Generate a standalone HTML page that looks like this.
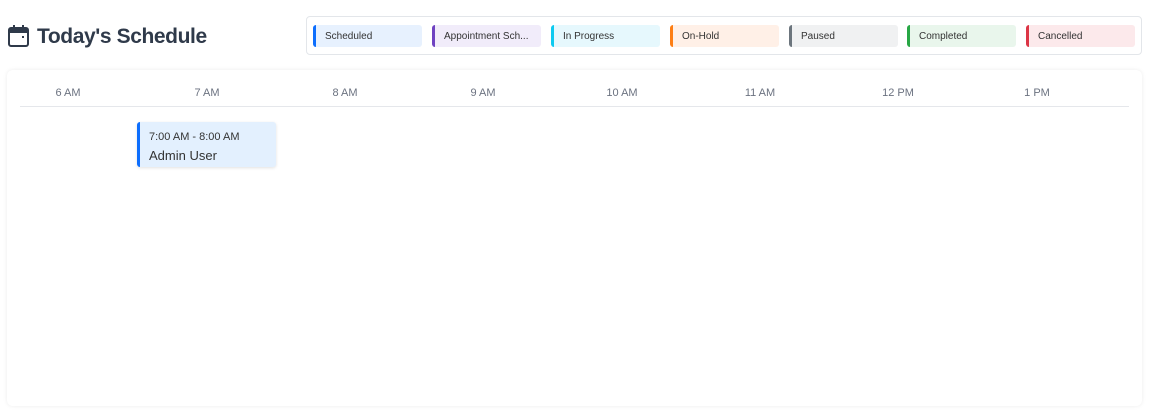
<!DOCTYPE html>
<html><head><style>
*{box-sizing:border-box;margin:0;padding:0}
body{width:1149px;height:416px;background:#fff;font-family:"Segoe UI","Liberation Sans",sans-serif;color:#2d3748;position:relative;overflow:hidden}
.title{position:absolute;left:37px;top:25px;font-size:21px;font-weight:600;color:#2f3a4a;letter-spacing:-0.4px}
.legend{position:absolute;left:306px;top:16px;width:836px;height:39px;border:1px solid #e3e6ea;border-radius:4px;background:#fff}
.it{position:absolute;top:8px;width:109px;height:22px;border-left:3px solid;border-radius:3px;font-size:10px;line-height:24px;padding-left:9px;color:#333}
.card{position:absolute;left:7px;top:70px;width:1135px;height:336px;border-radius:6px;background:#fff;box-shadow:0 0 4px rgba(0,0,0,.08)}
.hl{position:absolute;top:17px;font-size:11px;color:#6b7280;transform:translateX(-50%)}
.line{position:absolute;left:13px;top:36px;width:1109px;height:1px;background:#e5e7eb}
.ev{position:absolute;left:130px;top:52px;width:139px;height:45px;background:#e3f0fe;border-left:3px solid #0d6efd;border-radius:3px;box-shadow:0 1px 3px rgba(0,0,0,.12);padding-left:9px}
</style></head><body>
<svg style="position:absolute;left:8px;top:25px" width="21" height="22" viewBox="0 0 21 22"><rect x="1" y="3" width="19" height="18" rx="2" fill="none" stroke="#2f3a4a" stroke-width="2"/><rect x="1" y="3" width="19" height="5" fill="#2f3a4a"/><rect x="5" y="0" width="2" height="4" fill="#2f3a4a"/><rect x="14" y="0" width="2" height="4" fill="#2f3a4a"/><rect x="14" y="11" width="2" height="2" fill="#2f3a4a"/></svg>
<div class="title">Today's Schedule</div>
<div class="legend">
<div class="it" style="left:6px;border-color:#0d6efd;background:#e7f1fe">Scheduled</div>
<div class="it" style="left:125px;border-color:#6f42c1;background:#f1ecfa">Appointment Sch...</div>
<div class="it" style="left:244px;border-color:#0dcaf0;background:#e6f8fd">In Progress</div>
<div class="it" style="left:363px;border-color:#fd7e14;background:#fff0e7">On-Hold</div>
<div class="it" style="left:482px;border-color:#6c757d;background:#f0f1f2">Paused</div>
<div class="it" style="left:600px;border-color:#28a745;background:#e9f6ec">Completed</div>
<div class="it" style="left:719px;border-color:#dc3545;background:#fce9eb">Cancelled</div>
</div>
<div class="card">
<div class="hl" style="left:61px">6 AM</div>
<div class="hl" style="left:200px">7 AM</div>
<div class="hl" style="left:338px">8 AM</div>
<div class="hl" style="left:476px">9 AM</div>
<div class="hl" style="left:615px">10 AM</div>
<div class="hl" style="left:753px">11 AM</div>
<div class="hl" style="left:891px">12 PM</div>
<div class="hl" style="left:1030px">1 PM</div>
<div class="line"></div>
<div class="ev"><div style="font-size:11px;margin-top:9px;color:#333">7:00 AM - 8:00 AM</div><div style="font-size:13px;margin-top:5px;color:#333">Admin User</div></div>
</div>
</body></html>
